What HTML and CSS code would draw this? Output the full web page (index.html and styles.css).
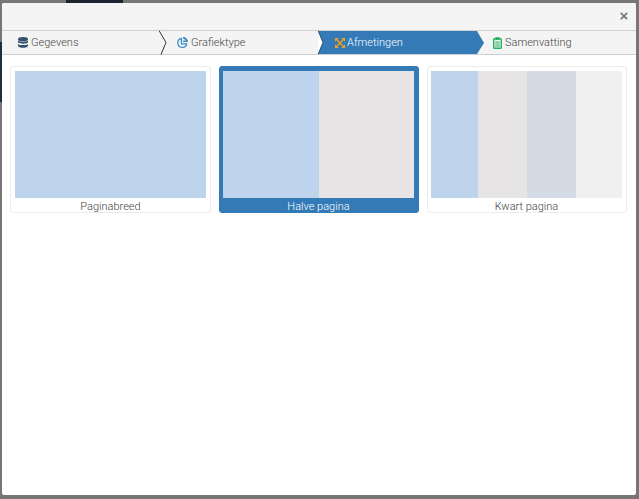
FILE: index.html
```
<!DOCTYPE html>
<html lang="nl">
<head>
<meta charset="utf-8">
<title>Grafiek</title>
<link rel="stylesheet" href="styles.css">
</head>
<body>
<div class="backdrop-top"><span class="backdrop-dark"></span></div>
<div class="modal">
  <header class="modal-head"><button class="close" aria-label="Sluiten">×</button></header>
  <nav class="steps">
    <div class="step step-1">
      <svg class="ico ico-data" viewBox="0 0 10 11"><ellipse cx="5" cy="2.2" rx="5" ry="2.1" fill="#34526f"/><path d="M0 3.6c1 1.6 9 1.6 10 0v2c-1 1.6-9 1.6-10 0zM0 6.9c1 1.6 9 1.6 10 0v1.8c-.6 2.8-9.4 2.8-10 0z" fill="#34526f"/></svg>
      <span>Gegevens</span>
      <svg class="chev" viewBox="0 0 8 24"><path d="M0 0l7 12-5 12" fill="none" stroke="#333"/></svg>
    </div>
    <div class="step step-2">
      <svg class="ico ico-chart" viewBox="0 0 12 12"><path d="M4.8 1.6a4.9 4.9 0 1 0 5.8 5.8H4.8z" fill="none" stroke="#3c8dc8" stroke-width="1.4"/><path d="M6.6 0a5.3 5.3 0 0 1 5.4 5.4H6.6zM6.6 1.6v2.2h3.4z" fill="#3c8dc8" fill-rule="evenodd"/></svg>
      <span>Grafiektype</span>
      <svg class="chev chev-dark" viewBox="0 0 8 24"><path d="M0 0l5 12-5 12" fill="#fff" stroke="#2a4f70"/></svg>
    </div>
    <div class="step step-3">
      <svg class="ico ico-size" viewBox="0 0 11 11"><path d="M2 2l7 7M9 2l-7 7" stroke="#f0a020" stroke-width="1.6" fill="none"/><path d="M0 0h4.2L0 4.2zM11 0v4.2L6.8 0zM0 11V6.8L4.2 11zM11 11H6.8L11 6.8z" fill="#f0a020"/></svg>
      <span>Afmetingen</span>
    </div>
    <div class="step step-4">
      <svg class="ico ico-sum" viewBox="0 0 9 12"><rect x=".7" y="1.8" width="7.6" height="9.5" rx=".8" fill="none" stroke="#27ae60" stroke-width="1.4"/><rect x="2.5" y=".2" width="4" height="2.8" fill="#27ae60"/><path d="M2.2 5h4.6M2.2 7h4.6M2.2 9h4.6" stroke="#27ae60"/></svg>
      <span>Samenvatting</span>
    </div>
  </nav>
  <main class="cards">
    <article class="card">
      <div class="preview"><i class="c-blue"></i></div>
      <div class="label">Paginabreed</div>
    </article>
    <article class="card card-narrow selected">
      <div class="preview"><i class="c-blue"></i><i class="c-grey"></i></div>
      <div class="label">Halve pagina</div>
    </article>
    <article class="card card-narrow">
      <div class="preview preview-quarter"><i class="c-blue"></i><i class="c-grey"></i><i class="c-slate"></i><i class="c-light"></i></div>
      <div class="label">Kwart pagina</div>
    </article>
  </main>
</div>
</body>
</html>
```
FILE: styles.css
```
* { box-sizing: border-box; }
html, body { margin: 0; height: 100%; }
body {
  background: linear-gradient(#1c2f40, #1c2f40) 0 42px / 2px 60px no-repeat, #767676;
  font-family: Roboto, "Liberation Sans", sans-serif;
  font-weight: 300;
  font-size: 11px;
  color: #444;
  overflow: hidden;
}
.backdrop-top { height: 3px; display: flex; }
.backdrop-dark { width: 57px; margin-left: 66px; background: #1c2430; }
.modal {
  margin: 0 3px 0 2px;
  height: 492px;
  background: #fff;
  border-radius: 2px;
  overflow: hidden;
}
.modal-head {
  height: 27px;
  background: #f4f4f4;
  display: flex;
  justify-content: flex-end;
  align-items: center;
}
.close {
  border: 0;
  background: none;
  padding: 0;
  margin: 0 6px 2px 0;
  width: 12px;
  font: 700 15px/15px "Liberation Sans", sans-serif;
  color: #777;
}
.steps {
  height: 25px;
  display: flex;
  background: #f4f4f4;
  border-top: 1px solid #cfcfcf;
  border-bottom: 1px solid #cfcfcf;
}
.step {
  position: relative;
  display: flex;
  align-items: center;
  gap: 3px;
  height: 23px;
}
.ico { height: 11px; flex: none; }
.ico-data { width: 10px; }
.ico-chart { width: 11px; height: 11px; }
.ico-size { width: 10px; height: 10px; }
.ico-sum { width: 9px; height: 12px; }
.step-1 { width: 157px; padding-left: 16px; }
.step-2 { width: 159px; padding-left: 18px; }
.step-3 {
  width: 166px;
  padding-left: 17px;
  gap: 2px;
  color: #fff;
  background: #337ab7;
  clip-path: polygon(0 0, 159px 0, 166px 12px, 159px 100%, 0 100%, 5px 12px);
}
.step-4 { padding-left: 9px; }
.chev {
  position: absolute;
  left: 100%;
  top: -1px;
  width: 8px;
  height: 25px;
  z-index: 1;
}
.cards {
  display: flex;
  gap: 8px;
  padding: 11px 8px 0 8px;
}
.card {
  width: 201px;
  height: 147px;
  padding: 4px 4px 0;
  border: 1px solid #ececec;
  border-radius: 3px;
  text-align: center;
}
.card-narrow { width: 200px; padding-left: 3px; }
.card.selected {
  background: #337ab7;
  border-color: #337ab7;
  color: #fff;
}
.preview { height: 127px; display: flex; }
.preview i { flex: 1; display: block; }
.preview-quarter { display: grid; grid-template-columns: 47px 49px 49px 46px; }
.c-blue { background: #bdd4ec; }
.c-grey { background: #e6e4e4; }
.c-slate { background: #d5dbe4; }
.c-light { background: #f0f0f0; }
.label { line-height: 11px; margin-top: 3px; }
```
